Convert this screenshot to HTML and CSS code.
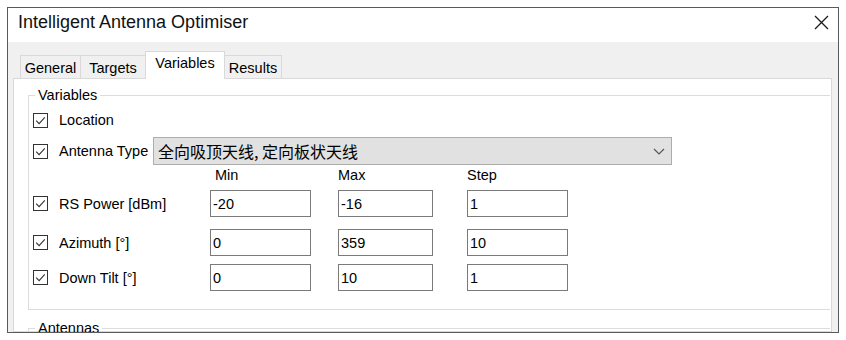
FILE: index.html
```html
<!DOCTYPE html>
<html>
<head>
<meta charset="utf-8">
<link rel="stylesheet" href="styles.css">
</head>
<body>
<div class="window">
  <div class="titlebar">
    <span class="title">Intelligent Antenna Optimiser</span>
    <svg class="close" width="15" height="15" viewBox="0 0 15 15"><path d="M1 1 L14 14 M14 1 L1 14" stroke="#1a1a1a" stroke-width="1.3" fill="none"/></svg>
  </div>
  <div class="client">
    <div class="tabs">
      <div class="tab t-general">General</div>
      <div class="tab t-targets">Targets</div>
      <div class="tab t-variables active">Variables</div>
      <div class="tab t-results">Results</div>
    </div>
    <div class="panel">
      <fieldset class="group">
        <legend>Variables</legend>
        <div class="row row-location">
          <span class="cb"><svg width="15" height="15" viewBox="0 0 15 15"><rect x="0.5" y="0.5" width="14" height="14" fill="#fff" stroke="#333"/><path d="M3.2 7.6 L6.1 10.6 L11.8 4.4" stroke="#333" stroke-width="1.1" fill="none"/></svg></span>
          <span class="lbl">Location</span>
        </div>
        <div class="row row-antenna">
          <span class="cb"><svg width="15" height="15" viewBox="0 0 15 15"><rect x="0.5" y="0.5" width="14" height="14" fill="#fff" stroke="#333"/><path d="M3.2 7.6 L6.1 10.6 L11.8 4.4" stroke="#333" stroke-width="1.1" fill="none"/></svg></span>
          <span class="lbl lbl-antenna">Antenna Type</span>
          <div class="combo">
            <span class="combo-text">全向吸顶天线, 定向板状天线</span>
            <svg width="12" height="7" viewBox="0 0 12 7"><path d="M1 1 L6 6 L11 1" stroke="#555" stroke-width="1.2" fill="none"/></svg>
          </div>
        </div>
        <div class="grid-row head-row">
          <span></span>
          <span class="head head-min">Min</span>
          <span class="head">Max</span>
          <span class="head">Step</span>
        </div>
        <div class="grid-row num-row r-rs">
          <span class="cell-check"><span class="cb"><svg width="15" height="15" viewBox="0 0 15 15"><rect x="0.5" y="0.5" width="14" height="14" fill="#fff" stroke="#333"/><path d="M3.2 7.6 L6.1 10.6 L11.8 4.4" stroke="#333" stroke-width="1.1" fill="none"/></svg></span><span class="lbl">RS Power [dBm]</span></span>
          <input class="field f-min" type="text" value="-20">
          <input class="field f-max" type="text" value="-16">
          <input class="field f-step" type="text" value="1">
        </div>
        <div class="grid-row num-row r-az">
          <span class="cell-check"><span class="cb"><svg width="15" height="15" viewBox="0 0 15 15"><rect x="0.5" y="0.5" width="14" height="14" fill="#fff" stroke="#333"/><path d="M3.2 7.6 L6.1 10.6 L11.8 4.4" stroke="#333" stroke-width="1.1" fill="none"/></svg></span><span class="lbl">Azimuth [°]</span></span>
          <input class="field f-min" type="text" value="0">
          <input class="field f-max" type="text" value="359">
          <input class="field f-step" type="text" value="10">
        </div>
        <div class="grid-row num-row r-dt">
          <span class="cell-check"><span class="cb"><svg width="15" height="15" viewBox="0 0 15 15"><rect x="0.5" y="0.5" width="14" height="14" fill="#fff" stroke="#333"/><path d="M3.2 7.6 L6.1 10.6 L11.8 4.4" stroke="#333" stroke-width="1.1" fill="none"/></svg></span><span class="lbl">Down Tilt [°]</span></span>
          <input class="field f-min" type="text" value="0">
          <input class="field f-max" type="text" value="10">
          <input class="field f-step" type="text" value="1">
        </div>
      </fieldset>
      <fieldset class="group group-antennas">
        <legend>Antennas</legend>
      </fieldset>
    </div>
  </div>
</div>
</body>
</html>
```
FILE: styles.css
```css
* { box-sizing: border-box; }
body {
  margin: 0;
  background: #fff;
  font-family: "Liberation Sans", Arial, sans-serif;
  font-size: 14px;
  color: #000;
}
.window {
  margin: 7px 0 0 7px;
  width: 832px;
  height: 326px;
  border: 1px solid #5a5a5a;
  background: #f0f0f0;
  display: flex;
  flex-direction: column;
  overflow: hidden;
}
.titlebar {
  height: 34px;
  flex: none;
  background: #fff;
  display: flex;
  align-items: center;
  justify-content: space-between;
  padding: 0 9px 6px 10px;
}
.title { font-size: 18px; color: #111; }
.close { display: block; }
.client {
  flex: 1;
  min-height: 0;
  padding: 9px 6px 0 5px;
  display: flex;
  flex-direction: column;
}
.tabs {
  flex: none;
  height: 27px;
  display: flex;
  align-items: flex-end;
  padding-left: 7px;
}
.tab {
  height: 23px;
  border: 1px solid #d9d9d9;
  border-bottom: none;
  margin-left: -1px;
  background: #f0f0f0;
  display: flex;
  align-items: center;
  justify-content: center;
  padding-top: 1px;
  font-size: 14.5px;
}
.tab:first-child { margin-left: 0; }
.t-general { width: 61px; }
.t-targets { width: 66px; }
.t-variables { width: 80px; }
.t-results { width: 58px; }
.tab.active {
  height: 28px;
  background: #fff;
  margin-bottom: -1px;
  position: relative;
  z-index: 1;
  padding-top: 0;
  padding-bottom: 6px;
}
.panel {
  flex: 1;
  min-height: 0;
  border: 1px solid #d9d9d9;
  background: #fff;
  padding: 8px 0 0 14px;
}
.group {
  margin: 0 1px 0 0;
  border: 1px solid #dcdcdc;
  border-right: none;
  padding: 7px 0 18px 4px;
  min-width: 0;
  font-size: 14.5px;
}
.group legend {
  padding: 0 3px;
  margin-left: 2px;
  line-height: 16px;
}
.group-antennas { margin-top: 10px; padding-bottom: 30px; }
.row {
  display: flex;
  align-items: center;
}
.row-location { height: 20px; }
.row-antenna { height: 28px; margin-top: 7px; }
.cb { display: flex; width: 15px; height: 15px; flex: none; }
.cb svg { display: block; }
.lbl { margin-left: 11px; white-space: nowrap; }
.lbl-antenna { width: 94px; flex: none; }
.combo {
  width: 519px;
  height: 28px;
  background: #e1e1e1;
  border: 1px solid #adadad;
  display: flex;
  align-items: center;
  justify-content: space-between;
  padding: 0 6px 0 4px;
}
.combo-text {
  font-family: "Noto Sans CJK SC", sans-serif;
  font-size: 16px;
}
.grid-row {
  display: grid;
  grid-template-columns: 177px 128px 129px 100px;
  align-items: center;
}
.head-row { height: 20px; }
.head-min { padding-left: 5px; }
.cell-check { display: flex; align-items: center; }
.num-row { height: 27px; }
.r-rs { margin-top: 5px; }
.r-az { margin-top: 12px; }
.r-dt { margin-top: 8px; }
.field {
  height: 27px;
  border: 1px solid #7a7a7a;
  padding: 0 0 0 2px;
  margin: 0;
  font-family: "Liberation Sans", Arial, sans-serif;
  font-size: 14.5px;
  color: #000;
  background: #fff;
  outline: none;
}
.f-min { width: 101px; }
.f-max { width: 95px; }
.f-step { width: 101px; }
```
